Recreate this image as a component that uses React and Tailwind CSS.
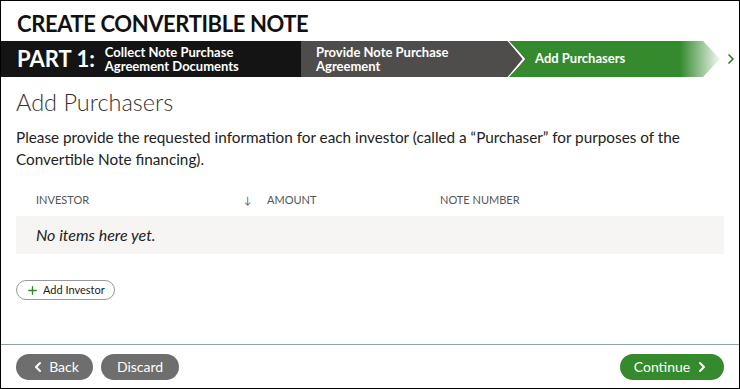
import { Plus, ChevronLeft, ChevronRight } from 'lucide-react'

function StepBar() {
  return (
    <div className="flex h-9 items-stretch bg-white">
      <div className="flex w-[300px] shrink-0 items-center gap-[10px] bg-[#141414] pl-4">
        <span className="text-[22px] font-bold leading-none text-white">PART 1:</span>
        <span className="text-[13px] font-bold leading-[14px] text-white">
          Collect Note Purchase
          <br />
          Agreement Documents
        </span>
      </div>
      <div className="relative z-10 flex w-[225px] shrink-0 items-center bg-[#4e4d4b] pl-[15px] [clip-path:polygon(0_0,208px_0,100%_50%,208px_100%,0_100%)]">
        <span className="text-[13px] font-bold leading-[14px] text-white">
          Provide Note Purchase
          <br />
          Agreement
        </span>
        <svg className="absolute right-0 top-0 h-9 w-[19px]" viewBox="0 0 19 36" fill="none">
          <polyline points="1,-1 17,18 1,37" stroke="white" strokeWidth="2" />
        </svg>
      </div>
      <div className="relative -ml-[18px] flex w-[215px] shrink-0 items-center bg-[linear-gradient(to_right,#348a2d_0%,#348a2d_80%,#ffffff_100%)] pl-[27px] [clip-path:polygon(0_0,195px_0,212px_50%,195px_100%,0_100%)]">
        <span className="text-[13px] font-bold text-white">Add Purchasers</span>
      </div>
      <div className="flex flex-1 items-center">
        <ChevronRight className="h-4 w-4 text-[#2c7a28]" strokeWidth={2.5} />
      </div>
    </div>
  )
}

export default function App() {
  return (
    <div
      className="flex h-[389px] w-[740px] flex-col border border-black bg-white text-[#222]"
      style={{ fontFamily: 'Lato, "Noto Sans", sans-serif' }}
    >
      <h1 className="px-4 pt-[7px] text-[22px] font-bold leading-[31px] tracking-[-0.4px] text-[#111]">
        CREATE CONVERTIBLE NOTE
      </h1>
      <div className="mt-[2px]">
        <StepBar />
      </div>

      <div className="flex-1 px-[15px]">
        <h2 className="mt-[10px] text-[23.5px] font-light leading-[30px] text-[#333]">Add Purchasers</h2>
        <p className="mt-[9px] text-[15.3px] leading-[22px] text-[#222]">
          Please provide the requested information for each investor (called a “Purchaser” for purposes of the
          Convertible Note financing).
        </p>

        <div className="mt-[19px]">
          <div className="flex h-[27px] items-center pb-[5px] text-[11px] uppercase text-[#555]">
            <span className="w-[224px] pl-[20px]">Investor</span>
            <span className="w-[27px] pl-[4px] text-[10px]">↓</span>
            <span className="w-[173px]">Amount</span>
            <span>Note Number</span>
          </div>
          <div className="flex h-[38px] items-center bg-[#f6f5f3] pl-[20px] text-[16px] italic text-[#222]">
            No items here yet.
          </div>
        </div>

        <button className="mt-[26px] flex h-[20px] items-center gap-[4px] rounded-full border border-[#999] px-[9px] text-[11px] text-[#222]">
          <Plus className="h-[13px] w-[13px] text-[#2e8a2a]" strokeWidth={2.5} />
          Add Investor
        </button>
      </div>

      <div className="flex h-[44px] items-center justify-between border-t border-[#8aa6a4] px-[15px]">
        <div className="flex gap-2">
          <button className="flex h-[26px] w-[77px] items-center justify-center gap-[3px] rounded-full bg-[#6e6e6e] text-[14px] text-white">
            <ChevronLeft className="h-4 w-4" strokeWidth={3} />
            Back
          </button>
          <button className="flex h-[26px] w-[78px] items-center justify-center rounded-full bg-[#6e6e6e] text-[14px] text-white">
            Discard
          </button>
        </div>
        <button className="flex h-[26px] w-[104px] items-center justify-center gap-[4px] rounded-full bg-[#348a2d] text-[14px] text-white">
          Continue
          <ChevronRight className="h-4 w-4" strokeWidth={3} />
        </button>
      </div>
    </div>
  )
}
